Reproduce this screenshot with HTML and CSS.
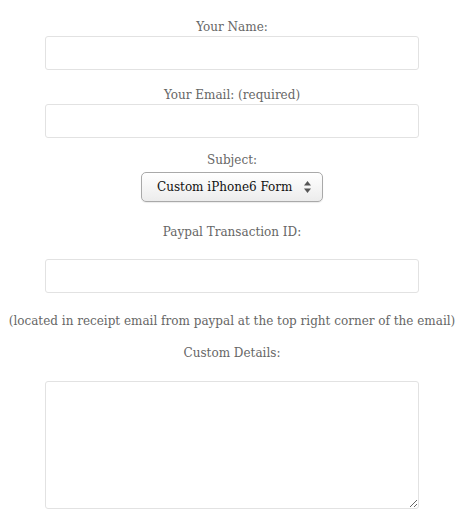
FILE: index.html
```html
<!DOCTYPE html>
<html lang="en">
<head>
  <meta charset="UTF-8">
  <meta name="viewport" content="width=device-width, initial-scale=1.0">
  <title>Custom Order</title>
  <link rel="stylesheet" href="styles.css">
</head>
<body>
  <form class="order-form">
    <label class="label label-name" for="your-name">Your Name:</label>
    <input class="text-input" type="text" id="your-name">

    <label class="label label-email" for="your-email">Your Email: (required)</label>
    <input class="text-input" type="email" id="your-email">

    <label class="label label-subject" for="subject">Subject:</label>
    <div class="select-wrap">
      <select class="subject-select" id="subject">
        <option>Custom iPhone6 Form</option>
      </select>
      <svg class="select-arrows" width="9" height="14" viewBox="0 0 9 14">
        <path d="M4.5 1 L8 5.5 L1 5.5 Z" fill="#555"/>
        <path d="M4.5 13 L8 8.5 L1 8.5 Z" fill="#555"/>
      </svg>
    </div>

    <label class="label label-paypal" for="paypal-id">Paypal Transaction ID:</label>
    <input class="text-input input-paypal" type="text" id="paypal-id">

    <p class="note">(located in receipt email from paypal at the top right corner of the email)</p>

    <label class="label label-details" for="details">Custom Details:</label>
    <textarea class="details" id="details"></textarea>
  </form>
</body>
</html>
```

FILE: styles.css
```css
body {
  margin: 0;
  padding: 0;
  background-color: #fff;
  font-family: "DejaVu Serif", serif;
  font-size: 12px;
  color: #666;
}
.order-form {
  width: 464px;
  padding-top: 19px;
  text-align: center;
}
.label {
  display: block;
  line-height: 17px;
}
.label-email {
  margin-top: 17px;
}
.label-subject {
  margin-top: 14px;
}
.label-paypal {
  margin-top: 22px;
}
.label-details {
  margin-top: 15px;
}
.text-input, .details {
  display: block;
  box-sizing: border-box;
  width: 374px;
  height: 34px;
  margin: 0 auto;
  border: 1px solid #e2e2e2;
  border-radius: 3px;
  background: #fff;
  font: inherit;
}
.input-paypal {
  margin-top: 18px;
}
.select-wrap {
  position: relative;
  width: 182px;
  margin: 3px auto 0;
}
.subject-select {
  -webkit-appearance: none;
  appearance: none;
  display: block;
  box-sizing: border-box;
  width: 182px;
  height: 30px;
  padding: 0 0 0 15px;
  border: 1px solid #a9a9a9;
  border-radius: 5px;
  background: linear-gradient(#ffffff, #ececec);
  box-shadow: 0 1px 1px rgba(0, 0, 0, 0.08);
  font-family: "DejaVu Serif", serif;
  font-size: 12px;
  color: #111;
}
.select-arrows {
  position: absolute;
  right: 11px;
  top: 8px;
  pointer-events: none;
}
.note {
  margin: 20px 0 0;
  line-height: 17px;
  white-space: nowrap;
}
.details {
  height: 128px;
  margin-top: 19px;
  resize: vertical;
}
```
